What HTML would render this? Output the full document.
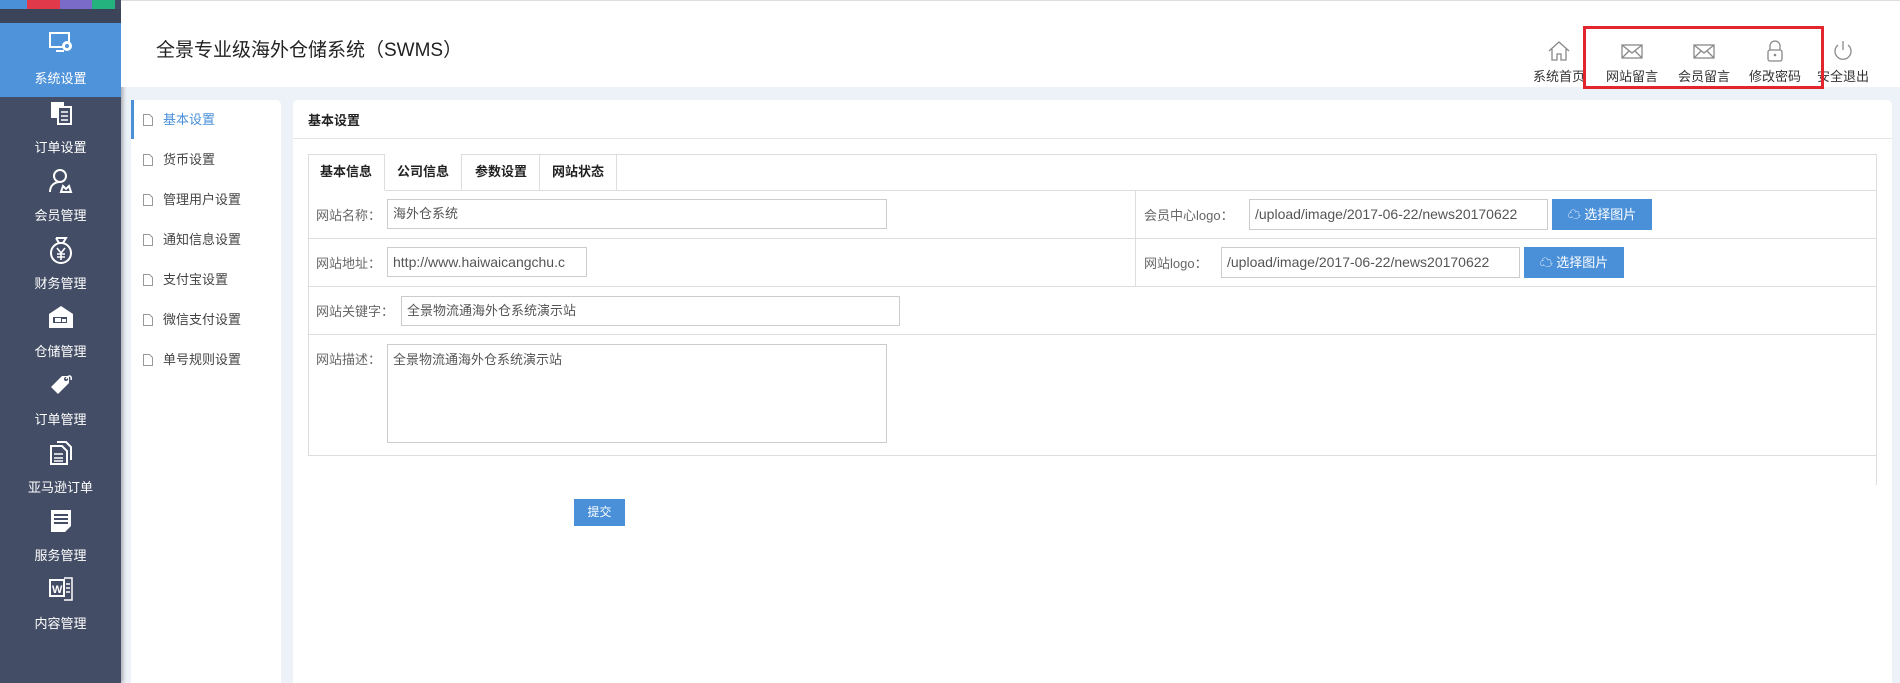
<!DOCTYPE html>
<html style="overflow:hidden;height:683px"><head><meta charset="utf-8"><style>
*{margin:0;padding:0;box-sizing:border-box}
body{width:1900px;height:683px;overflow:hidden;background:#edf2f9;font-family:"Liberation Sans","Noto Sans CJK SC",sans-serif;position:relative;color:#333}
.abs{position:absolute}
#side{left:0;top:0;width:121px;height:683px;background:#434d65;box-shadow:2px 0 4px rgba(0,0,0,.3)}
.strip{top:0;height:9px}
.item{left:0;width:121px;height:68px;color:#fff;font-size:13px;text-align:center}
.item svg{position:absolute;left:48px;top:8px}
.item span{position:absolute;left:0;right:0;top:26px;line-height:20px}
#hdr{left:121px;top:0;width:1779px;height:87px;background:#fff;border-top:1px solid #ddd}
.ti{font-size:19px;color:#222;left:35px;top:34px}
.tb{font-size:13px;color:#333;text-align:center;width:60px}
.tb svg{display:block;margin:0 auto}
#sub{left:131px;top:100px;width:150px;height:583px;background:#fff;border-radius:5px 5px 0 0}
.si{left:0;width:150px;height:40px;font-size:13px;color:#444;line-height:40px;padding-left:32px}
.si svg{position:absolute;left:12px;top:14px}
#main{left:293px;top:100px;width:1599px;height:583px;background:#fff;border-radius:5px 5px 0 0}
.lbl{font-size:13px;color:#666}
.inp{border:1px solid #ccc;background:#fff;font-size:13px;color:#555;padding-left:5px;line-height:28px;overflow:hidden;white-space:nowrap}
.btn{background:#4a90d9;color:#fff;font-size:13px;text-align:center;line-height:31px}
.hl{height:1px;background:#ddd}
.vl{width:1px;background:#ddd}
.tab{top:154px;height:36px;width:77px;font-size:13px;font-weight:bold;color:#222;text-align:center;line-height:36px;border-right:1px solid #ddd}
</style></head><body>
<div id="side" class="abs">
<div class="abs strip" style="left:0;width:27px;background:#4a90d9"></div>
<div class="abs strip" style="left:27px;width:33px;background:#e0394a"></div>
<div class="abs strip" style="left:60px;width:32px;background:#7b6bc9"></div>
<div class="abs strip" style="left:92px;width:23px;background:#24b37f"></div>
<div class="abs" style="left:0;top:9px;width:121px;height:14px;background:#3b4459"></div>
<div class="abs item" style="top:23px;height:74px;background:#4f93db"><svg width="26" height="24" viewBox="0 0 26 24" style="top:8px"><rect x="2" y="2" width="19" height="14" fill="none" stroke="#fff" stroke-width="2"/><path d="M8 20h8" stroke="#fff" stroke-width="2"/><circle cx="19" cy="15" r="5" fill="#fff"/><circle cx="19" cy="15" r="2" fill="#4f93db"/></svg><span style="top:46px">系统设置</span></div>
<div class="abs item" style="top:92px"><svg width="26" height="26" viewBox="0 0 26 26"><rect x="3" y="2" width="13" height="16" fill="#fff"/><rect x="10" y="7" width="13" height="17" fill="#434d65" stroke="#fff" stroke-width="2"/><path d="M13 12h7M13 16h7M13 20h7" stroke="#fff" stroke-width="1.5"/></svg><span style="top:46px">订单设置</span></div>
<div class="abs item" style="top:160px"><svg width="26" height="26" viewBox="0 0 26 26"><circle cx="12" cy="8" r="6" fill="none" stroke="#fff" stroke-width="2"/><path d="M2 24c0-7 5-10 10-10M13 24l2-6 3 3 3-3 2 6z" fill="none" stroke="#fff" stroke-width="2"/></svg><span style="top:46px">会员管理</span></div>
<div class="abs item" style="top:228px"><svg width="26" height="28" viewBox="0 0 26 28"><path d="M8 2h10l-3 5M8 2l3 5" fill="none" stroke="#fff" stroke-width="2"/><circle cx="13" cy="17" r="10" fill="none" stroke="#fff" stroke-width="2"/><path d="M9 12l4 5 4-5M13 17v7M9 18h8M9 21h8" stroke="#fff" stroke-width="1.6" fill="none"/></svg><span style="top:46px">财务管理</span></div>
<div class="abs item" style="top:296px"><svg width="26" height="26" viewBox="0 0 26 26"><path d="M1 10L13 2l12 8v14H1z" fill="#fff"/><rect x="5" y="13" width="14" height="6" fill="#434d65"/><rect x="7" y="14" width="6" height="4" fill="#fff"/><rect x="14" y="15" width="4" height="3" fill="#fff"/></svg><span style="top:46px">仓储管理</span></div>
<div class="abs item" style="top:364px"><svg width="26" height="26" viewBox="0 0 26 26"><path d="M3 15L14 4h7v7L10 22z" fill="#fff"/><circle cx="18" cy="7" r="2" fill="#434d65"/><path d="M18 7c3-5 6-3 5 1" stroke="#fff" fill="none" stroke-width="1.5"/></svg><span style="top:46px">订单管理</span></div>
<div class="abs item" style="top:432px"><svg width="26" height="26" viewBox="0 0 26 26"><path d="M3 6h11l5 5v13H3z" fill="none" stroke="#fff" stroke-width="2"/><path d="M9 2h9l5 5v13" fill="none" stroke="#fff" stroke-width="2"/><path d="M6 14h9M6 18h9M6 21h9" stroke="#fff" stroke-width="1.5"/></svg><span style="top:46px">亚马逊订单</span></div>
<div class="abs item" style="top:500px"><svg width="26" height="26" viewBox="0 0 26 26"><path d="M3 2h20v16l-6 6H3z" fill="#fff"/><path d="M6 7h14M6 11h14M6 15h14" stroke="#434d65" stroke-width="2"/></svg><span style="top:46px">服务管理</span></div>
<div class="abs item" style="top:568px"><svg width="26" height="26" viewBox="0 0 26 26"><rect x="2" y="4" width="14" height="16" fill="none" stroke="#fff" stroke-width="2"/><text x="4" y="17" font-size="11" fill="#fff" font-family="Liberation Sans" font-weight="bold">W</text><path d="M16 2h8v22h-8M18 8h4M18 12h4M18 16h4" fill="none" stroke="#fff" stroke-width="1.5"/></svg><span style="top:46px">内容管理</span></div>
</div>

<div id="hdr" class="abs">
<div class="abs ti">全景专业级海外仓储系统（SWMS）</div>
<div class="abs tb" style="left:1408px;top:38px"><svg width="24" height="24" viewBox="0 0 24 24"><path d="M2 12L12 3l10 9M5 10v11h5v-6h4v6h5V10" fill="none" stroke="#888" stroke-width="1.3"/></svg><div style="margin-top:3px">系统首页</div></div>
<div class="abs tb" style="left:1481px;top:38px"><svg width="24" height="24" viewBox="0 0 24 24"><rect x="2" y="6" width="20" height="13" fill="none" stroke="#888" stroke-width="1.3"/><path d="M2 6l10 8 10-8M2 19l7-7M22 19l-7-7" fill="none" stroke="#888" stroke-width="1.3"/></svg><div style="margin-top:3px">网站留言</div></div>
<div class="abs tb" style="left:1553px;top:38px"><svg width="24" height="24" viewBox="0 0 24 24"><rect x="2" y="6" width="20" height="13" fill="none" stroke="#888" stroke-width="1.3"/><path d="M2 6l10 8 10-8M2 19l7-7M22 19l-7-7" fill="none" stroke="#888" stroke-width="1.3"/></svg><div style="margin-top:3px">会员留言</div></div>
<div class="abs tb" style="left:1624px;top:38px"><svg width="24" height="24" viewBox="0 0 24 24"><path d="M7 11V7a5 5 0 0110 0v4" fill="none" stroke="#888" stroke-width="1.3"/><rect x="5" y="11" width="14" height="11" rx="2" fill="none" stroke="#888" stroke-width="1.3"/><circle cx="12" cy="16" r="1.3" fill="#888"/></svg><div style="margin-top:3px">修改密码</div></div>
<div class="abs tb" style="left:1692px;top:38px"><svg width="24" height="24" viewBox="0 0 24 24"><path d="M7 6a8 8 0 1010 0M12 2v9" fill="none" stroke="#888" stroke-width="1.3"/></svg><div style="margin-top:3px">安全退出</div></div>
<div class="abs" style="left:1462px;top:25px;width:241px;height:63px;border:3px solid #e3262e"></div>
</div>

<div id="sub" class="abs">
<div class="abs" style="left:0;top:0;width:3px;height:39px;background:#4a90d9"></div>
<div class="abs si" style="top:0;color:#4a90d9"><svg width="10" height="12" viewBox="0 0 10 12"><path d="M.5.5h6l3 3v8H.5z" fill="none" stroke="#999"/></svg>基本设置</div>
<div class="abs si" style="top:40px"><svg width="10" height="12" viewBox="0 0 10 12"><path d="M.5.5h6l3 3v8H.5z" fill="none" stroke="#999"/></svg>货币设置</div>
<div class="abs si" style="top:80px"><svg width="10" height="12" viewBox="0 0 10 12"><path d="M.5.5h6l3 3v8H.5z" fill="none" stroke="#999"/></svg>管理用户设置</div>
<div class="abs si" style="top:120px"><svg width="10" height="12" viewBox="0 0 10 12"><path d="M.5.5h6l3 3v8H.5z" fill="none" stroke="#999"/></svg>通知信息设置</div>
<div class="abs si" style="top:160px"><svg width="10" height="12" viewBox="0 0 10 12"><path d="M.5.5h6l3 3v8H.5z" fill="none" stroke="#999"/></svg>支付宝设置</div>
<div class="abs si" style="top:200px"><svg width="10" height="12" viewBox="0 0 10 12"><path d="M.5.5h6l3 3v8H.5z" fill="none" stroke="#999"/></svg>微信支付设置</div>
<div class="abs si" style="top:240px"><svg width="10" height="12" viewBox="0 0 10 12"><path d="M.5.5h6l3 3v8H.5z" fill="none" stroke="#999"/></svg>单号规则设置</div>
</div>

<div id="main" class="abs"></div>
<div class="abs" style="left:308px;top:110px;font-size:13px;font-weight:bold;color:#222">基本设置</div>
<div class="abs hl" style="left:293px;top:138px;width:1599px;background:#e5e5e5"></div>
<div class="abs" style="left:308px;top:154px;width:1569px;height:302px;border:1px solid #ddd"></div>
<div class="abs tab" style="left:308px">基本信息</div>
<div class="abs tab" style="left:385px;background:#fff">公司信息</div>
<div class="abs tab" style="left:463px">参数设置</div>
<div class="abs tab" style="left:540px">网站状态</div>
<div class="abs hl" style="left:385px;top:190px;width:1492px"></div>
<div class="abs hl" style="left:308px;top:238px;width:1569px"></div>
<div class="abs hl" style="left:308px;top:286px;width:1569px"></div>
<div class="abs hl" style="left:308px;top:334px;width:1569px"></div>
<div class="abs vl" style="left:1135px;top:190px;height:96px"></div>
<div class="abs vl" style="left:1876px;top:455px;height:30px"></div>

<div class="abs lbl" style="left:316px;top:205px">网站名称：</div>
<div class="abs inp" style="left:387px;top:199px;width:500px;height:30px">海外仓系统</div>
<div class="abs lbl" style="left:316px;top:253px">网站地址：</div>
<div class="abs inp" style="left:387px;top:247px;width:200px;height:30px;font-size:14px">http://www.haiwaicangchu.c</div>
<div class="abs lbl" style="left:316px;top:301px">网站关键字：</div>
<div class="abs inp" style="left:401px;top:296px;width:499px;height:30px">全景物流通海外仓系统演示站</div>
<div class="abs lbl" style="left:316px;top:349px">网站描述：</div>
<div class="abs inp" style="left:387px;top:344px;width:500px;height:99px;line-height:30px">全景物流通海外仓系统演示站</div>

<div class="abs lbl" style="left:1144px;top:205px">会员中心logo：</div>
<div class="abs inp" style="left:1249px;top:199px;width:299px;height:31px;font-size:14px">/upload/image/2017-06-22/news20170622</div>
<div class="abs btn" style="left:1552px;top:199px;width:100px;height:31px">&#9729; 选择图片</div>
<div class="abs lbl" style="left:1144px;top:253px">网站logo：</div>
<div class="abs inp" style="left:1221px;top:247px;width:299px;height:31px;font-size:14px">/upload/image/2017-06-22/news20170622</div>
<div class="abs btn" style="left:1524px;top:247px;width:100px;height:31px">&#9729; 选择图片</div>

<div class="abs btn" style="left:574px;top:499px;width:51px;height:27px;line-height:27px;font-size:12px">提交</div>
</body></html>
